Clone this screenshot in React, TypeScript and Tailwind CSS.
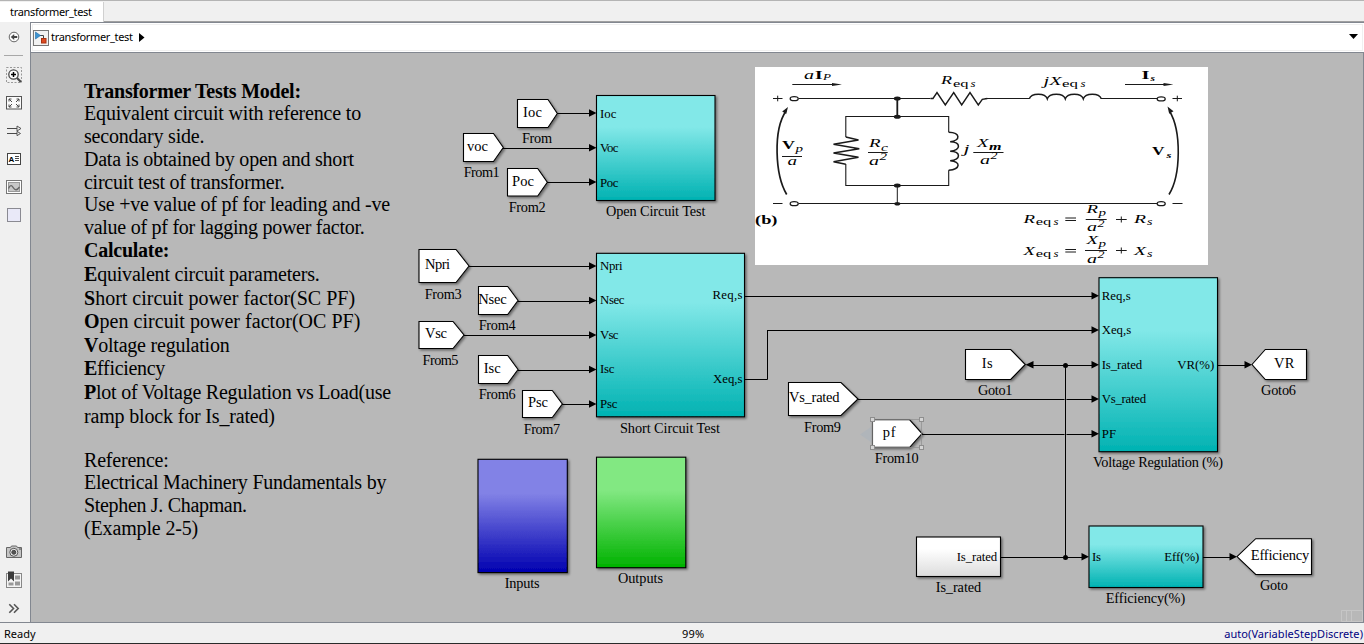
import React from "react";

const SERIF = "'Liberation Serif', 'Times New Roman', serif";

/* ---------- diagram primitives ---------- */

type TxtProps = {
  x: number;
  y: number;
  w: number;
  size: number;
  children: string;
  italic?: boolean;
  bold?: boolean;
  stretch?: boolean;
};

function Txt({ x, y, w, size, children, italic, bold, stretch }: TxtProps) {
  return (
    <text
      x={x}
      y={y}
      fontFamily={SERIF}
      fontSize={size}
      fontStyle={italic ? "italic" : "normal"}
      fontWeight={bold ? 700 : 400}
      textLength={w}
      lengthAdjust={stretch ? "spacingAndGlyphs" : "spacing"}
      fill="#000"
    >
      {children}
    </text>
  );
}

type Label = [text: string, x: number, baseline: number, width: number];

type TagProps = {
  left: number;
  right: number;
  notch: number;
  top: number;
  bottom: number;
  flip?: boolean;
  text: Label;
  name: Label;
};

function Tag({ left, right, notch, top, bottom, flip, text, name }: TagProps) {
  const mid = (top + bottom) / 2;
  const points = flip
    ? `${left},${mid} ${notch},${top} ${right},${top} ${right},${bottom} ${notch},${bottom}`
    : `${left},${top} ${notch},${top} ${right},${mid} ${notch},${bottom} ${left},${bottom}`;
  return (
    <g>
      <polygon points={points} fill="#fff" stroke="#000" strokeWidth="1.1" filter="url(#shadow)" />
      <Txt x={text[1]} y={text[2]} w={text[3]} size={14.5}>{text[0]}</Txt>
      <Txt x={name[1]} y={name[2]} w={name[3]} size={14.3}>{name[0]}</Txt>
    </g>
  );
}

type BlockProps = {
  x: number;
  y: number;
  w: number;
  h: number;
  fill: string;
  name: Label;
  ports?: Label[];
};

function Block({ x, y, w, h, fill, name, ports = [] }: BlockProps) {
  return (
    <g>
      <rect x={x} y={y} width={w} height={h} fill={`url(#${fill})`} stroke="#000" strokeWidth="1.1" filter="url(#shadow)" />
      {ports.map((p) => (
        <Txt key={p[0]} x={p[1]} y={p[2]} w={p[3]} size={12.8}>{p[0]}</Txt>
      ))}
      <Txt x={name[1]} y={name[2]} w={name[3]} size={14.3}>{name[0]}</Txt>
    </g>
  );
}

function Wire({ x1, x2, y, arrow = y - 0.5 }: { x1: number; x2: number; y: number; arrow?: number }) {
  return (
    <g>
      <path d={`M${x1} ${y}H${x2 - 5}`} stroke="#000" fill="none" />
      <path d={`M${x2} ${arrow}l-7.5 -3.7v7.4z`} fill="#000" />
    </g>
  );
}

function Gradient({ id, from, to }: { id: string; from: string; to: string }) {
  return (
    <linearGradient id={id} x1="0" y1="0" x2="0" y2="1">
      <stop offset="0.3" stopColor={from} />
      <stop offset="1" stopColor={to} />
    </linearGradient>
  );
}

/* ---------- equivalent circuit figure ---------- */

function CircuitFigure() {
  return (
    <g>
      <rect x="755" y="67" width="453" height="198" fill="#fff" />
      <g stroke="#1a1a1a" fill="none" strokeWidth="1">
        <path d="M798.5 98.5H930.5M985 98.5H1029.5M1101 98.5H1157M798.5 203.5H1157" />
        <path d="M897.3 98.5V116.5" strokeWidth="1.8" />
        <path d="M897.3 185.5V203.5" />
        <path d="M845.8 137V116.5H948.7V132.3M845.8 164V185.5H948.7V170.3" strokeWidth="1.1" />
        <path d="M930.5 98.5h2.5l4 -6l8.3 12.5l8.4 -12.5l8 12.5l8.3 -12.5l8.3 12.5l4 -5.6l5 -.9" strokeWidth="1.4" />
        <path d="M845.8 137L858.5 140L833.5 144.3L859.3 148.7L833.5 153L858.5 157.3L833.5 161.7L845.8 164.2" strokeWidth="1.4" />
        <path d="M1029.3 98.8c2 -6.2 16 -6.2 18 0c2 -6.2 16 -6.2 18 0c2 -6.2 16 -6.2 18 0c2 -6.2 16 -6.2 18 0" strokeWidth="1.5" />
        <path d="M948.7 132.3c12 .5 12 8 1.5 9.5c11 .5 11 8 0 9.5c11 .5 11 8 0 9.5c11 .5 10.5 8.5 -1.5 9.5" strokeWidth="1.5" />
        <path d="M792.3 84.5H834M1125 84.5H1166" />
        <path d="M786.7 194.5C775 175 773 130 786 111" strokeWidth="1.7" />
        <path d="M1169 194.5C1181 175 1181.5 131 1169.5 111" strokeWidth="1.6" />
        <g fill="#fff" strokeWidth="1.3">
          <ellipse cx="794.2" cy="98.7" rx="4" ry="2" />
          <ellipse cx="794.2" cy="203.7" rx="4" ry="2" />
          <ellipse cx="1161.2" cy="98.9" rx="4" ry="2" />
          <ellipse cx="1161.2" cy="203.7" rx="4" ry="2" />
        </g>
        <path d="M773 98.5h9.5M777.7 95.7v5.6M1172.5 98.5h9.5M1177.3 95.7v5.6M773 203.5h9.5M1172.5 203.5h10" />
        <path d="M782 156.5h20M868 152.5h19.7M973.3 152.5h30.2M1085.7 219.5h21M1085 250.5h22" />
        <path d="M1065.3 218h10.7M1065.3 220.5h10.7M1065.3 249.5h10.7M1065.3 252h10.7M1116 219.5h10.7M1121.3 216.5v6M1116 250.5h10.7M1121.3 247.5v6" />
      </g>
      <g fill="#1a1a1a">
        <path d="M842 84.5l-10 -1.6v3.2zM1173.5 84.5l-10 -1.6v3.2zM788 107l-5.8 4.5l4 2.5zM1167.5 106.5l6 4.7l-4.3 2.6z" />
        <ellipse cx="897.3" cy="98.5" rx="3.5" ry="2" />
        <ellipse cx="897.3" cy="116.8" rx="3.5" ry="2" />
        <ellipse cx="897.3" cy="185.6" rx="3.5" ry="2" />
        <ellipse cx="897.3" cy="203.7" rx="3" ry="1.8" />
      </g>
      <Txt x={804} y={79} w={10} size={12.5} italic stretch>a</Txt>
      <Txt x={815} y={79} w={7.5} size={12} bold stretch>I</Txt>
      <Txt x={823} y={80} w={8} size={9} italic stretch>P</Txt>
      <Txt x={941} y={84} w={11} size={12.5} italic stretch>R</Txt>
      <Txt x={953} y={86.5} w={15.5} size={10.5} stretch>eq</Txt>
      <Txt x={970.5} y={86.5} w={5} size={10} italic stretch>s</Txt>
      <Txt x={1043.5} y={84.5} w={18} size={12.5} italic stretch>jX</Txt>
      <Txt x={1062} y={86.5} w={16} size={10.5} stretch>eq</Txt>
      <Txt x={1080.5} y={86.5} w={5} size={10} italic stretch>s</Txt>
      <Txt x={1141.5} y={79} w={8} size={12.5} bold stretch>I</Txt>
      <Txt x={1150.5} y={81} w={4.5} size={9} italic bold stretch>s</Txt>
      <Txt x={782} y={149} w={13} size={11.5} bold stretch>V</Txt>
      <Txt x={795.5} y={152} w={7.5} size={10} italic stretch>p</Txt>
      <Txt x={787.5} y={165.3} w={9.5} size={12.5} italic stretch>a</Txt>
      <Txt x={869} y={147.3} w={11.5} size={12.5} italic stretch>R</Txt>
      <Txt x={881} y={150.5} w={7} size={10} italic stretch>c</Txt>
      <Txt x={869} y={164.5} w={10} size={12.5} italic stretch>a</Txt>
      <Txt x={879.5} y={159.5} w={7.5} size={10} italic stretch>2</Txt>
      <Txt x={963.5} y={153} w={6} size={12.5} italic stretch>j</Txt>
      <Txt x={977} y={147.3} w={11.5} size={12.5} italic stretch>X</Txt>
      <Txt x={989} y={150} w={12.5} size={10} italic bold stretch>m</Txt>
      <Txt x={980} y={164} w={10} size={12.5} italic stretch>a</Txt>
      <Txt x={990.5} y={159} w={7} size={10} italic stretch>2</Txt>
      <Txt x={1152} y={155.3} w={12.5} size={11.5} bold stretch>V</Txt>
      <Txt x={1166.5} y={158.3} w={5} size={9} italic bold stretch>s</Txt>
      <Txt x={755} y={224} w={22.5} size={12} bold stretch>(b)</Txt>
      {([["R", 222.5, 213, 231.3], ["X", 254.7, 244.3, 262.7]] as [string, number, number, number][]).map(
        ([sym, base, num, den]) => (
          <g key={sym}>
            <Txt x={1023.5} y={base} w={11.5} size={12.5} italic stretch>{sym}</Txt>
            <Txt x={1035.7} y={base + 2.5} w={15.5} size={10.5} stretch>eq</Txt>
            <Txt x={1053.5} y={base + 2.5} w={5} size={10} italic stretch>s</Txt>
            <Txt x={1086.5} y={num} w={11.5} size={12.5} italic stretch>{sym}</Txt>
            <Txt x={1098.5} y={num + 2.5} w={7.5} size={10.5} italic stretch>p</Txt>
            <Txt x={1087} y={den} w={10} size={12.5} italic stretch>a</Txt>
            <Txt x={1097.5} y={den - 4.5} w={7} size={10} italic stretch>2</Txt>
            <Txt x={1134} y={base} w={12} size={12.5} italic stretch>{sym}</Txt>
            <Txt x={1147} y={base + 2.5} w={5.5} size={10} italic stretch>s</Txt>
          </g>
        ),
      )}
    </g>
  );
}

/* ---------- model data ---------- */

const tags: TagProps[] = [
  { left: 517.5, right: 557.3, notch: 548, top: 99.5, bottom: 127.5, text: ["Ioc", 523, 117, 19], name: ["From", 522, 143, 30] },
  { left: 463.5, right: 503.3, notch: 493.5, top: 133.5, bottom: 161.5, text: ["voc", 467, 151, 21], name: ["From1", 463.7, 177, 36] },
  { left: 507.5, right: 547.3, notch: 537.7, top: 168.5, bottom: 196, text: ["Poc", 512, 186, 22], name: ["From2", 508.7, 212, 37] },
  { left: 419, right: 469, notch: 456, top: 249.5, bottom: 282.5, text: ["Npri", 425, 269, 25], name: ["From3", 424.7, 299, 37] },
  { left: 478.5, right: 518, notch: 507.7, top: 286.5, bottom: 314.5, text: ["Nsec", 478.3, 304, 28.5], name: ["From4", 478.7, 330, 37] },
  { left: 419, right: 464, notch: 453, top: 321.5, bottom: 348.5, text: ["Vsc", 425, 338, 22], name: ["From5", 422.5, 365, 36] },
  { left: 478.5, right: 518, notch: 507.7, top: 355.5, bottom: 383.5, text: ["Isc", 483.7, 373, 17], name: ["From6", 478.7, 399, 37] },
  { left: 522.5, right: 562.3, notch: 552.3, top: 390.5, bottom: 417.5, text: ["Psc", 528, 407, 20], name: ["From7", 523.7, 434, 36.5] },
  { left: 965.5, right: 1025.3, notch: 1010.7, top: 349.5, bottom: 379.5, text: ["Is", 981.7, 368, 11], name: ["Goto1", 978, 395, 34.5] },
  { left: 788.5, right: 858, notch: 841, top: 382.5, bottom: 415.5, text: ["Vs_rated", 789, 402, 50.5], name: ["From9", 804, 432, 37] },
  { left: 872.5, right: 922, notch: 909.7, top: 419.8, bottom: 447.3, text: ["pf", 882.7, 436.5, 13], name: ["From10", 874.7, 463, 44] },
  { left: 1252, right: 1306.5, notch: 1265.3, top: 349.5, bottom: 379.5, flip: true, text: ["VR", 1274, 368, 20.5], name: ["Goto6", 1261, 395, 35] },
  { left: 1237, right: 1311.5, notch: 1255.7, top: 538.7, bottom: 574.5, flip: true, text: ["Efficiency", 1250.7, 560, 58.5], name: ["Goto", 1260, 590, 28] },
];

const blocks: BlockProps[] = [
  {
    x: 596.5, y: 95.5, w: 118.5, h: 105, fill: "teal", name: ["Open Circuit Test", 606, 216, 99.5],
    ports: [["Ioc", 600, 118, 16.5], ["Voc", 600, 152, 18.5], ["Poc", 600, 187, 18.5]],
  },
  {
    x: 596.5, y: 253.3, w: 148, h: 163.5, fill: "teal", name: ["Short Circuit Test", 620, 433, 100],
    ports: [
      ["Npri", 600, 270, 22.5], ["Nsec", 600, 304, 24.5], ["Vsc", 600, 339, 18.5], ["Isc", 600, 373, 14.5], ["Psc", 600, 408, 17.5],
      ["Req,s", 712.5, 299, 30], ["Xeq,s", 713, 383, 29.5],
    ],
  },
  {
    x: 1099, y: 277.7, w: 118.5, h: 174, fill: "teal", name: ["Voltage Regulation (%)", 1093, 467, 130],
    ports: [
      ["Req,s", 1101.7, 300, 29], ["Xeq,s", 1101.7, 334, 29.5], ["Is_rated", 1101.7, 369, 40.5], ["Vs_rated", 1101.7, 403, 44.5],
      ["PF", 1101.7, 438, 14.3], ["VR(%)", 1177.3, 369, 37],
    ],
  },
  { x: 916.5, y: 537, w: 84, h: 39.5, fill: "gray", name: ["Is_rated", 935.7, 592, 45.5], ports: [["Is_rated", 956.7, 561, 40.5]] },
  {
    x: 1089, y: 526, w: 114, h: 61.5, fill: "teal", name: ["Efficiency(%)", 1105.7, 603, 79.5],
    ports: [["Is", 1092, 561, 9], ["Eff(%)", 1164.3, 561, 35]],
  },
  { x: 478, y: 459.3, w: 89.3, h: 113.3, fill: "blue", name: ["Inputs", 504.7, 588, 35] },
  { x: 596.5, y: 457.2, w: 89.3, h: 110.5, fill: "green", name: ["Outputs", 618, 583, 45] },
];

function Diagram() {
  return (
    <svg className="absolute inset-0 h-full w-full" viewBox="31 53 1332 569" preserveAspectRatio="xMinYMin meet">
      <defs>
        <Gradient id="teal" from="#82e8e8" to="#00b2b2" />
        <Gradient id="green" from="#82e882" to="#00b200" />
        <Gradient id="blue" from="#8282e6" to="#0000b0" />
        <Gradient id="gray" from="#ffffff" to="#dcdcdc" />
        <filter id="shadow" x="-10%" y="-15%" width="125%" height="135%">
          <feDropShadow dx="1.5" dy="1.5" stdDeviation="1.2" floodColor="#000" floodOpacity="0.45" />
        </filter>
      </defs>
      <CircuitFigure />
      <path d="M860 434.5l11.5 -8v16z" fill="#b0b5ba" />
      {blocks.map((b) => <Block key={b.name[0]} {...b} />)}
      {tags.map((t) => <Tag key={t.name[0]} {...t} />)}
      <Wire x1={557} x2={596.5} y={113.5} />
      <Wire x1={503} x2={596.5} y={148.5} arrow={147.8} />
      <Wire x1={547} x2={596.5} y={182.5} />
      <Wire x1={469} x2={596.5} y={266.5} />
      <Wire x1={518} x2={596.5} y={301.5} arrow={300.5} />
      <Wire x1={464} x2={596.5} y={335.5} />
      <Wire x1={518} x2={596.5} y={370.5} arrow={369.5} />
      <Wire x1={562} x2={596.5} y={404.5} />
      <Wire x1={745} x2={1099} y={296.5} arrow={295.7} />
      <path d="M745 379.5H767.5V330.5" stroke="#000" fill="none" />
      <Wire x1={767} x2={1099} y={330.5} />
      <Wire x1={858} x2={1099} y={399.5} />
      <Wire x1={922} x2={1099} y={434.5} arrow={433.7} />
      <path d="M1065.5 370V552" stroke="#b8b8b8" strokeWidth="3" strokeOpacity="0.45" />
      <path d="M1065.5 365V557" stroke="#000" />
      <Wire x1={1032} x2={1099} y={365.5} arrow={364.7} />
      <path d="M1025.5 364.7l8 -3.7v7.4z" fill="#000" />
      <Wire x1={1218} x2={1252} y={365.5} arrow={364.7} />
      <Wire x1={1001} x2={1089} y={557.5} arrow={556.7} />
      <Wire x1={1203} x2={1237} y={557.5} arrow={556.7} />
      <circle cx="1065.5" cy="365.5" r="2.5" />
      <circle cx="1065.5" cy="557.5" r="2.5" />
      <g fill="none" stroke="#8e8e8e">
        <rect x="872.5" y="419.5" width="49" height="28" strokeOpacity="0.7" />
        {[[870.5, 417.5], [919.5, 417.5], [870.5, 445.5], [919.5, 445.5]].map(([x, y]) => (
          <rect key={`${x}-${y}`} x={x} y={y} width="4" height="4" fill="#d4d4d4" />
        ))}
      </g>
      <path d="M1341.5 610.5h21v11h-21zM1346.5 610.5v11M1351.5 610.5v11" fill="none" stroke="#c6c6c6" />
    </svg>
  );
}

/* ---------- model annotation ---------- */

function Notes() {
  return (
    <div className="absolute left-[53px] top-[26.6px] whitespace-nowrap font-['Liberation_Serif','Times_New_Roman',serif] text-[20px] text-black">
      <div className="leading-[22.75px]">
        <p className="font-bold tracking-[-0.24px]">Transformer Tests Model:</p>
        <p className="tracking-[-0.17px]">Equivalent circuit with reference to</p>
        <p className="tracking-[-0.2px]">secondary side.</p>
        <p className="tracking-[-0.23px]">Data is obtained by open and short</p>
        <p className="tracking-[-0.26px]">circuit test of transformer.</p>
        <p className="tracking-[-0.22px]">Use +ve value of pf for leading and -ve</p>
        <p className="tracking-[-0.27px]">value of pf for lagging power factor.</p>
        <p className="font-bold tracking-[-0.25px]">Calculate:</p>
      </div>
      <div className="pt-[1.4px] leading-[23.6px]">
        <p className="tracking-[-0.2px]"><b>E</b>quivalent circuit parameters.</p>
        <p><b>S</b>hort circuit power factor(SC PF)</p>
        <p className="tracking-[0.03px]"><b>O</b>pen circuit power factor(OC PF)</p>
        <p className="tracking-[-0.22px]"><b>V</b>oltage regulation</p>
        <p className="tracking-[-0.3px]"><b>E</b>fficiency</p>
        <p className="tracking-[-0.22px]"><b>P</b>lot of Voltage Regulation vs Load(use</p>
        <p className="tracking-[-0.17px]">ramp block for Is_rated)</p>
      </div>
      <div className="pt-[20.5px] leading-[22.7px]">
        <p className="tracking-[-0.2px]">Reference:</p>
        <p className="tracking-[-0.23px]">Electrical Machinery Fundamentals by</p>
        <p className="tracking-[-0.32px]">Stephen J. Chapman.</p>
        <p className="tracking-[-0.15px]">(Example 2-5)</p>
      </div>
    </div>
  );
}

/* ---------- side toolbar ---------- */

function Icon({ children }: { children: React.ReactNode }) {
  return (
    <svg className="block h-[28px] w-[28px] shrink-0" viewBox="0 0 28 28" fill="none" stroke="#4a4a4a">
      {children}
    </svg>
  );
}

function SideBar() {
  return (
    <div className="flex w-[30px] shrink-0 flex-col items-start bg-[#f0f0f0]">
      <Icon>
        <circle cx="14" cy="15" r="4.8" stroke="#666" fill="#fafafa" />
        <path d="M10.8 15l3.4 -3v1.9h3v2.2h-3v1.9z" fill="#444" stroke="none" />
      </Icon>
      <div className="mb-[5px] ml-[4px] mt-[5px] h-px w-[19px] bg-[#a8a8a8]" />
      <Icon>
        <rect x="6.500" y="6.500" width="15" height="15" stroke="#999" strokeDasharray="2 1.5" />
        <circle cx="13.500" cy="13.500" r="4.700" fill="#fff" strokeWidth="1.3" />
        <path d="M11 13.500h5M13.500 11v5" stroke="#000" strokeWidth="1.500" />
        <path d="M17 17l4 4" strokeWidth="2.200" />
      </Icon>
      <Icon>
        <rect x="6.500" y="7.500" width="15" height="12.500" fill="#fafafa" stroke="#555" />
        <path d="M9 12.500v-2.500h2.500M9 10l3 3M19 12.500v-2.500h-2.500M19 10l-3 3M9 15.500v2.500h2.500M9 18l3 -3M19 15.500v2.500h-2.500M19 18l-3 -3" />
      </Icon>
      <Icon>
        <path d="M7 11.500h10.500M7 16.500h10.500" strokeWidth="1.200" />
        <path d="M17 9l4 2.500l-4 2.500zM17 14.300l3.500 2.200l-3.500 2.200z" fill="#eee" strokeWidth="0.900" />
      </Icon>
      <Icon>
        <rect x="7.500" y="8.500" width="13" height="11" fill="#fff" stroke="#444" />
        <text x="8.500" y="16.800" fontSize="8" fontWeight="700" fontFamily="'Liberation Sans', sans-serif" fill="#000" stroke="none">A</text>
        <path d="M15 11.500h4M15 13.500h4M15 15.500h4" />
      </Icon>
      <Icon>
        <rect x="6.500" y="7.500" width="15" height="13" fill="#fff" stroke="#777" />
        <rect x="8.500" y="9.500" width="11" height="9" fill="#c8c8c8" stroke="#999" />
        <path d="M8.500 15.500c2 -4.500 3.500 -3 5 -.5s3.500 2.500 6 -1" stroke="#666" strokeWidth="1.400" />
      </Icon>
      <Icon>
        <rect x="7.500" y="7.500" width="13" height="13" fill="#e9e9f8" stroke="#8a8a92" />
      </Icon>
      <div className="flex-1" />
      <Icon>
        <path d="M6.500 9.500h4l1 -1.500h5l1 1.500h4v10h-15z" fill="#c4c4c4" stroke="#666" />
        <circle cx="13.800" cy="14.300" r="4" fill="#eee" stroke="#555" />
        <circle cx="13.800" cy="14.300" r="2" fill="#555" stroke="#444" />
        <path d="M19 11h2" />
      </Icon>
      <Icon>
        <rect x="6.500" y="7.500" width="15" height="14" fill="#f4f4f4" stroke="#888" />
        <path d="M8 5.500h6v10l-3 -3l-3 3z" fill="#3c3c3c" stroke="none" />
        <path d="M15 9.500h5v4h-5zM15 15.500h5v4h-5zM8.500 16.500h5v3h-5z" fill="#999" stroke="none" />
      </Icon>
      <Icon>
        <path d="M9.300 10.300l4.200 4.200l-4.200 4.200M14 10.300l4.200 4.200l-4.200 4.200" stroke="#555" strokeWidth="1.600" />
      </Icon>
    </div>
  );
}

export default function App() {
  return (
    <div className="flex h-[644px] w-[1364px] flex-col overflow-hidden bg-[#f0f0f0] font-['Noto_Sans',sans-serif] text-[11px] text-black">
      <div className="flex h-[22px] shrink-0 border-t border-[#b4b4b4] pt-px">
        <div className="flex w-[104px] items-center border-r border-[#d0d0d0] bg-white pl-[10px]">
          <span className="tracking-[-0.32px]">transformer_test</span>
        </div>
        <div className="flex-1 border-b border-[#a0a0a0]" />
      </div>
      <div className="flex min-h-0 flex-1">
        <SideBar />
        <div className="flex min-w-0 flex-1 flex-col border-l border-[#828790]">
          <div className="flex h-[31px] shrink-0 border-y border-[#828790] bg-white p-px">
            <div className="flex flex-1 items-center border border-[#f0f0f0] pr-[4px]">
              <svg className="block h-4 w-4" viewBox="0 0 16 16">
                <rect x="0.500" y="0.500" width="15" height="15" fill="#f2f2f2" stroke="#777" />
                <path d="M7 5.500h3.500v4" fill="none" stroke="#444" />
                <path d="M2.500 2l5 3.500l-5 3.500z" fill="#3d93d0" stroke="#1a6aa8" strokeWidth="0.600" />
                <rect x="8.500" y="8.500" width="4.500" height="4.500" fill="#dd4a22" stroke="#a83210" />
              </svg>
              <span className="ml-[2px] tracking-[-0.32px]">transformer_test</span>
              <svg className="ml-[6px] block h-[9px] w-[6px]" viewBox="0 0 6 9"><path d="M0 0L5.500 4.500L0 9z" /></svg>
              <div className="flex-1" />
              <svg className="mb-[3px] block h-[5px] w-[9px]" viewBox="0 0 9 5"><path d="M0 0h9L4.500 5z" /></svg>
            </div>
          </div>
          <div className="relative flex-1 overflow-hidden border-r border-[#828790] bg-[#b8b8b8]">
            <Notes />
            <Diagram />
          </div>
        </div>
      </div>
      <div className="grid h-[22px] shrink-0 grid-cols-3 items-center border-b border-t border-b-[#2a2a2a] border-t-[#828790] pl-[4px] pr-[1px] pt-[2px]">
        <span>Ready</span>
        <span className="pl-[225px] tracking-[0.2px]">99%</span>
        <span className="text-right tracking-[0.06px] text-[#000080]">auto(VariableStepDiscrete)</span>
      </div>
    </div>
  );
}
